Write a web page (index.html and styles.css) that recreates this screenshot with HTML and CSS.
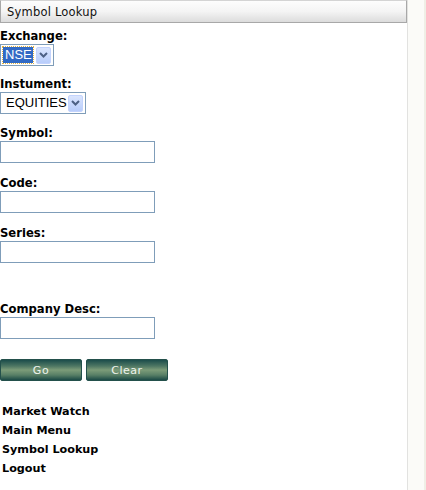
FILE: index.html
```html
<!DOCTYPE html>
<html lang="en">
<head>
    <meta charset="UTF-8">
    <meta name="viewport" content="width=device-width, initial-scale=1.0">
    <title>Symbol Lookup</title>
    <link rel="stylesheet" href="styles.css">
</head>
<body>
    <div class="page">
        <div class="main">
            <div class="title-bar">Symbol Lookup</div>

            <form class="lookup-form" onsubmit="return false;">
                <div class="field field-exchange">
                    <label>Exchange:</label>
                    <div class="combo combo-exchange">
                        <span class="combo-value selected">NSE</span>
                        <span class="combo-arrow">
                            <svg width="9" height="6" viewBox="0 0 9 6"><path d="M1 1 L4.5 4.5 L8 1" fill="none" stroke="#4d6185" stroke-width="2"/></svg>
                        </span>
                    </div>
                </div>

                <div class="field field-instrument">
                    <label>Instument:</label>
                    <div class="combo combo-instrument">
                        <span class="combo-value">EQUITIES</span>
                        <span class="combo-arrow">
                            <svg width="9" height="6" viewBox="0 0 9 6"><path d="M1 1 L4.5 4.5 L8 1" fill="none" stroke="#4d6185" stroke-width="2"/></svg>
                        </span>
                    </div>
                </div>

                <div class="field field-symbol">
                    <label for="symbol">Symbol:</label>
                    <input type="text" id="symbol" class="text-input">
                </div>

                <div class="field">
                    <label for="code">Code:</label>
                    <input type="text" id="code" class="text-input">
                </div>

                <div class="field">
                    <label for="series">Series:</label>
                    <input type="text" id="series" class="text-input">
                </div>

                <div class="field field-desc">
                    <label for="desc">Company Desc:</label>
                    <input type="text" id="desc" class="text-input">
                </div>

                <div class="actions">
                    <button class="btn">Go</button>
                    <button class="btn" type="reset">Clear</button>
                </div>
            </form>

            <ul class="nav-links">
                <li><a href="#">Market Watch</a></li>
                <li><a href="#">Main Menu</a></li>
                <li><a href="#">Symbol Lookup</a></li>
                <li><a href="#">Logout</a></li>
            </ul>
        </div>
        <div class="side"></div>
    </div>
</body>
</html>
```

FILE: styles.css
```css
* {
    box-sizing: border-box;
    margin: 0;
    padding: 0;
}

html, body {
    height: 100%;
}

body {
    font-family: "DejaVu Sans", Verdana, sans-serif;
    font-size: 11px;
    color: #000;
    background: #fff;
}

.page {
    display: flex;
    min-height: 100%;
}

.main {
    width: 407px;
    flex-shrink: 0;
}

.side {
    flex: 1;
    background: #fbfbf8;
    border-left: 1px solid #e2e2e0;
    border-right: 2px solid #efefe6;
}

.title-bar {
    height: 23px;
    padding: 4px 6px 0;
    font-size: 11.5px;
    letter-spacing: 0.2px;
    color: #111;
    border: 1px solid #a8a8a8;
    border-top-color: #d4d4d4;
    background: linear-gradient(#fdfdfd, #f4f4f4 50%, #dcdcdc);
}

.lookup-form {
    display: flex;
    flex-direction: column;
}

.field {
    display: flex;
    flex-direction: column;
    align-items: flex-start;
    margin-top: 13px;
}

.field-exchange {
    margin-top: 6px;
}

.field-instrument {
    margin-top: 11px;
}

.field-symbol {
    margin-top: 12px;
}

.field-desc {
    margin-top: 39px;
}

label {
    font-weight: bold;
    font-size: 11.6px;
    line-height: 15px;
}

.combo {
    display: flex;
    align-items: center;
    height: 22px;
    padding: 2px;
    border: 1px solid #7f9db9;
    background: #fff;
    font-family: "Liberation Sans", Arial, sans-serif;
    font-size: 13px;
}

.combo-exchange {
    width: 54px;
}

.combo-instrument {
    width: 86px;
}

.combo-value {
    flex: 1;
    height: 16px;
    line-height: 16px;
    padding-left: 2px;
}

.combo-value.selected {
    background: #316ac5;
    color: #fff;
    outline: 1px dotted #e0b040;
    margin-right: 3px;
}

.combo-instrument .combo-value {
    padding-left: 3px;
}

.combo-arrow {
    width: 15px;
    height: 17px;
    display: flex;
    align-items: center;
    justify-content: center;
    border: 1px solid #c3d3fd;
    border-radius: 2px;
    background: linear-gradient(#dae5fe, #b8cdfb);
}

.text-input {
    width: 155px;
    height: 22px;
    border: 1px solid #7f9db9;
    padding: 2px;
    font-size: 12px;
}

.actions {
    display: flex;
    gap: 4px;
    margin-top: 20px;
}

.btn {
    width: 82px;
    height: 22px;
    border: 1px solid #23504b;
    border-radius: 2px;
    color: #eef4ee;
    font-family: "DejaVu Sans", Verdana, sans-serif;
    font-size: 11px;
    letter-spacing: 0.5px;
    cursor: pointer;
    background: linear-gradient(#1c4d4b, #4d7663 30%, #7c9c79 50%, #587f66 75%, #1c4a46);
}

.nav-links {
    list-style: none;
    margin-top: 21px;
    padding-left: 2px;
}

.nav-links li {
    line-height: 19px;
}

.nav-links a {
    color: #000;
    font-weight: bold;
    font-size: 11.2px;
    text-decoration: none;
}
```
